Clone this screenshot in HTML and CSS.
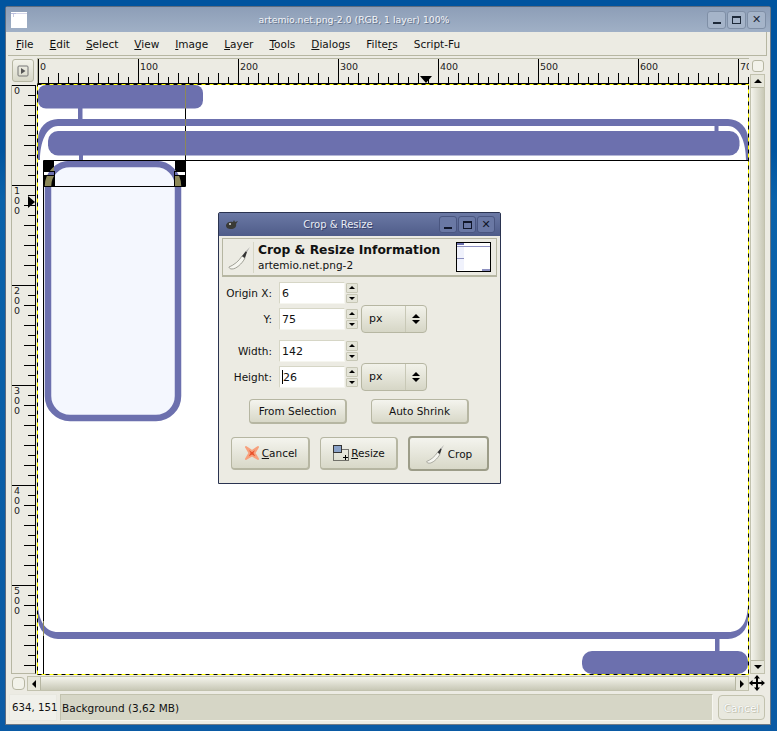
FILE: index.html
```html
<!DOCTYPE html>
<html lang="en">
<head>
    <meta charset="UTF-8">
    <title>artemio.net.png-2.0 (RGB, 1 layer) 100%</title>
    <link rel="stylesheet" href="styles.css">
</head>
<body>

    <div class="window">
        <div class="titlebar">
            <svg class="title-icon" width="16" height="16" viewBox="0 0 16 16">
                <rect width="16" height="16" fill="#fff"/>
                <rect x="0" y="1" width="5" height="1" fill="#b9bedd"/>
                <rect x="2" y="2" width="1" height="3" fill="#c9cce4"/>
                <rect x="5" y="1" width="11" height="1" fill="#d5d7ea"/>
            </svg>
            <div class="title-text">artemio.net.png-2.0 (RGB, 1 layer) 100%</div>
            <div class="wm-buttons">
                <div class="wm-btn"><span class="wm-min"></span></div>
                <div class="wm-btn"><span class="wm-max"></span></div>
                <div class="wm-btn"><span class="wm-close">✕</span></div>
            </div>
        </div>

        <div class="menubar">
            <span><u>F</u>ile</span>
            <span><u>E</u>dit</span>
            <span><u>S</u>elect</span>
            <span><u>V</u>iew</span>
            <span><u>I</u>mage</span>
            <span><u>L</u>ayer</span>
            <span><u>T</u>ools</span>
            <span><u>D</u>ialogs</span>
            <span>Filte<u>r</u>s</span>
            <span>Script-Fu</span>
        </div>

        <div class="workspace">
            <div class="menu-corner">
                <div class="corner-btn">
                    <svg width="12" height="12" viewBox="0 0 12 12">
                        <rect x="1" y="1" width="10" height="10" rx="1" fill="none" stroke="#777"/>
                        <path d="M4 3l4.500 3-4.500 3z" fill="#555"/>
                    </svg>
                </div>
            </div>

            <div class="ruler-h">
                <span>0</span><span>100</span><span>200</span><span>300</span>
                <span>400</span><span>500</span><span>600</span><span>700</span>
                <div class="ruler-mark"></div>
            </div>

            <div class="right-col">
                <div class="quick-btn"></div>
                <div class="vscroll">
                    <div class="scroll-btn"><i class="tri-up"></i></div>
                    <div class="scroll-btn"><i class="tri-down"></i></div>
                </div>
            </div>

            <div class="ruler-v">
                <span>0</span>
                <span>1<br>0<br>0</span>
                <span>2<br>0<br>0</span>
                <span>3<br>0<br>0</span>
                <span>4<br>0<br>0</span>
                <span>5<br>0<br>0</span>
                <div class="ruler-mark-v"></div>
            </div>

            <div class="canvas">
                <svg class="drawing" width="712" height="591" viewBox="37 84 712 591">
                    <defs>
                        <clipPath id="handles">
                            <path d="M44 161h10v10h-10zM175 161h10v10h-10zM44 176h10v10h-10zM175 176h10v10h-10z"/>
                        </clipPath>
                    </defs>
                    <rect x="37" y="84" width="712" height="591" fill="#fff"/>

                    <!-- frame pieces: only the corners and the long edges exist in the image -->
                    <path d="M38 160V139A20 20 0 0 1 58 119H728A20 20 0 0 1 748 139V160H746C746 143 740 126 728 126H58C46 126 40 143 40 160Z" fill="#6c70ae"/>
                    <path d="M38 606V618A20.500 20.500 0 0 0 58 639H728A20.500 20.500 0 0 0 748 618V606C747 622 742 632 728 632H58C46 632 39 622 38 606Z" fill="#6c70ae"/>

                    <rect x="38" y="85" width="165" height="23.500" rx="8" fill="#6c70ae"/>
                    <rect x="78" y="108" width="4.500" height="12" fill="#6c70ae"/>
                    <rect x="48" y="131" width="691.500" height="24.500" rx="10" fill="#6c70ae"/>
                    <rect x="714.500" y="125" width="4" height="6" fill="#6c70ae"/>
                    <rect x="79" y="155" width="4" height="7" fill="#6c70ae"/>
                    <rect x="48" y="164" width="130" height="254" rx="22" fill="#f4f7fe" stroke="#6c70ae" stroke-width="6.500"/>
                    <rect x="582" y="651" width="166" height="23" rx="10" fill="#6c70ae"/>
                    <rect x="715" y="638" width="4.500" height="14" fill="#6c70ae"/>

                    <!-- crop handles -->
                    <path d="M44 161h10v10h-10zM175 161h10v10h-10zM44 176h10v10h-10zM175 176h10v10h-10z" fill="#000"/>
                    <rect x="48" y="164" width="130" height="254" rx="22" fill="none" stroke="#8c8858" stroke-width="6.500" clip-path="url(#handles)"/>
                    <path d="M43.500 160.500h705M43.500 186.500h142M43.500 160.500v514M185.500 85v76M185.500 160.500v26M54.500 171v15M174.500 171v15M43 171.500h11M175 171.500h11M43 175.500h11M175 175.500h11" fill="none" stroke="#000"/>
                    <path d="M185.500 85v23.500M185.500 119v7M185.500 131v24.500M43.500 621v15" fill="none" stroke="#8c8858"/>

                    <!-- layer boundary -->
                    <rect x="37.500" y="84.500" width="711" height="590" fill="none" stroke="#ff0"/>
                    <rect x="37.500" y="84.500" width="711" height="590" fill="none" stroke="#000" stroke-dasharray="4 4"/>
                </svg>
            </div>

            <div class="corner-left">
                <div class="quick-btn"></div>
            </div>
            <div class="hscroll">
                <div class="scroll-btn"><i class="tri-left"></i></div>
                <div class="scroll-btn"><i class="tri-right"></i></div>
            </div>
            <div class="nav-corner">
                <svg width="16" height="16" viewBox="0 0 16 16">
                    <path d="M8 0l3 3.500h-2v3.500h3.500v-2l3.500 3-3.500 3v-2h-3.500v3.500h2l-3 3.500-3-3.500h2v-3.500h-3.500v2l-3.500-3 3.500-3v2h3.500v-3.500h-2z" fill="#000"/>
                </svg>
            </div>
        </div>

        <div class="statusbar">
            <div class="coords">634, 151</div>
            <div class="layer-info">Background (3,62 MB)</div>
            <div class="status-cancel">Cancel</div>
        </div>
    </div>

    <!-- Crop & Resize dialog -->
    <div class="dialog">
        <div class="dialog-title">
            <svg class="wilber" width="14" height="10" viewBox="0 0 14 10">
                <path d="M1 5c1-3 4-4 7-3l1-2 1 2 3-1-2 3c1 3-2 5-5 5-3 0-5-1-5-4z" fill="#3a3a36"/>
                <circle cx="5" cy="4" r="1" fill="#ddd"/>
            </svg>
            <div class="dialog-name">Crop &amp; Resize</div>
            <div class="wm-buttons small">
                <div class="wm-btn"><span class="wm-min"></span></div>
                <div class="wm-btn"><span class="wm-max"></span></div>
                <div class="wm-btn"><span class="wm-close">✕</span></div>
            </div>
        </div>

        <div class="dialog-body">
            <div class="info-box">
                <div class="info-icon">
                    <svg width="24" height="24" viewBox="0 0 24 24">
                        <path d="M2 21C7 19 12 15 15 10L18 12C15 18 9 23 5 23 3 23 2 22 2 21Z" fill="#f6f6f0" stroke="#8a8a80" stroke-width=".8"/>
                        <path d="M15 10L19 5 20 6 18 12Z" fill="#333"/>
                        <path d="M19 5L23 1 20 6Z" fill="#aaa"/>
                    </svg>
                </div>
                <div class="info-text">
                    <div class="info-head">Crop &amp; Resize Information</div>
                    <div class="info-sub">artemio.net.png-2</div>
                </div>
                <svg class="thumb" width="35" height="30" viewBox="0 0 35 30">
                    <rect x=".500" y=".500" width="34" height="29" fill="#fff" stroke="#000"/>
                    <rect x="1" y="1" width="7" height="2" fill="#6c70ae"/>
                    <rect x="1" y="4" width="33" height="1" fill="#8d90c0"/>
                    <rect x="1" y="5" width="7" height="23" fill="#f0f2fc"/>
                    <rect x="1" y="16" width="7" height="1" fill="#8d90c0"/>
                    <rect x="26" y="27" width="8" height="2" fill="#8d90c0"/>
                </svg>
            </div>

            <div class="fields first">
                <label>Origin X:</label>
                <div class="spin-entry"><span class="entry">6</span><div class="spin"><b><i class="tri-up"></i></b><b><i class="tri-down"></i></b></div></div>
                <div></div>
                <label>Y:</label>
                <div class="spin-entry"><span class="entry">75</span><div class="spin"><b><i class="tri-up"></i></b><b><i class="tri-down"></i></b></div></div>
                <div class="unit"><span>px</span><div class="unit-arrows"><i class="tri-up"></i><i class="tri-down"></i></div></div>
            </div>

            <div class="fields second">
                <label>Width:</label>
                <div class="spin-entry"><span class="entry">142</span><div class="spin"><b><i class="tri-up"></i></b><b><i class="tri-down"></i></b></div></div>
                <div></div>
                <label>Height:</label>
                <div class="spin-entry"><span class="entry"><span class="caret"></span>26</span><div class="spin"><b><i class="tri-up"></i></b><b><i class="tri-down"></i></b></div></div>
                <div class="unit"><span>px</span><div class="unit-arrows"><i class="tri-up"></i><i class="tri-down"></i></div></div>
            </div>

            <div class="mid-buttons">
                <div class="btn">From Selection</div>
                <div class="btn">Auto Shrink</div>
            </div>

            <div class="action-buttons">
                <div class="btn action">
                    <svg width="18" height="18" viewBox="0 0 18 18">
                        <path d="M3 3l6 4 6-4-3.500 6 3.500 6-6-3.500-6 3.500 3.500-6z" fill="#e8502a" stroke="#f7a07c" stroke-width="2" stroke-linejoin="round"/>
                    </svg>
                    <span><u>C</u>ancel</span>
                </div>
                <div class="btn action resize">
                    <svg width="18" height="16" viewBox="0 0 18 16">
                        <rect x="1.500" y="4.500" width="15" height="11" fill="none" stroke="#000" stroke-dasharray="1 1"/>
                        <rect x="1.500" y=".500" width="8" height="7" fill="#8aa2c8" stroke="#333"/>
                        <path d="M11 12.500h5M13.500 10v5" stroke="#000" fill="none"/>
                    </svg>
                    <span><u>R</u>esize</span>
                </div>
                <div class="btn action default">
                    <svg width="20" height="20" viewBox="0 0 24 24">
                        <path d="M2 21C7 19 12 15 15 10L18 12C15 18 9 23 5 23 3 23 2 22 2 21Z" fill="#f6f6f0" stroke="#8a8a80" stroke-width=".8"/>
                        <path d="M15 10L19 5 20 6 18 12Z" fill="#333"/>
                        <path d="M19 5L23 1 20 6Z" fill="#aaa"/>
                    </svg>
                    <span>Crop</span>
                </div>
            </div>
        </div>
    </div>

</body>
</html>
```

FILE: styles.css
```css
body {
    font-family: "DejaVu Sans", sans-serif;
    font-size: 10.5px;
    color: #111;
    background: linear-gradient(#00549f 0, #00549f 150px, #0a62aa 200px, #0a5aa4 100%);
    margin: 0;
    height: 731px;
    overflow: hidden;
    position: relative;
}

u {
    text-underline-offset: 1px;
}

.window {
    box-sizing: border-box;
    width: 766px;
    height: 719px;
    margin-left: 5px;
    position: relative;
    top: 6px;
    display: flex;
    flex-direction: column;
    background: #ecebe3;
    border: 1px solid #5d6c80;
    border-right-color: #6f7a86;
    border-bottom-color: #6f7a86;
    border-radius: 3px 3px 0 0;
}

.titlebar {
    height: 25px;
    flex: none;
    display: flex;
    align-items: center;
    padding: 0 4px 0 5px;
    background: linear-gradient(#8d9eb7, #a0b0c6);
}

.title-icon {
    flex: none;
}

.title-text {
    flex: 1;
    text-align: center;
    color: #f2f4f8;
    font-size: 9.3px;
    padding-right: 26px;
    text-shadow: 1px 1px 0 #66758c;
}

.wm-buttons {
    display: flex;
    gap: 1px;
    flex: none;
}

.wm-btn {
    box-sizing: border-box;
    width: 19px;
    height: 18px;
    border: 1px solid #7f8fa6;
    border-radius: 3px;
    display: flex;
    align-items: center;
    justify-content: center;
    background: #a5b4c9;
}

.wm-min {
    display: block;
    width: 8px;
    height: 2px;
    background: #1e2a3a;
    margin-top: 7px;
}

.wm-max {
    display: block;
    box-sizing: border-box;
    width: 9px;
    height: 8px;
    border: 1px solid #1e2a3a;
    border-top-width: 2px;
}

.wm-close {
    color: #1e2a3a;
    font-size: 11px;
    line-height: 1;
}

.menubar {
    height: 23px;
    flex: none;
    display: flex;
    align-items: center;
    gap: 16px;
    padding-left: 8px;
    border-bottom: 1px solid #b6b6a2;
    border-right: 1px solid #b6b6a2;
    margin-left: 2px;
    margin-right: 3px;
}

.workspace {
    flex: none;
    margin-top: 2px;
    margin-left: 5px;
    display: grid;
    grid-template-columns: 26px 712px 18px;
    grid-template-rows: 26px 591px 16px;
}

.menu-corner {
    display: flex;
    padding: 1px 0 0 1px;
}

.corner-btn {
    box-sizing: border-box;
    width: 22px;
    height: 23px;
    border: 1px solid #b6b6a2;
    border-radius: 3px;
    background: linear-gradient(#f2f2ea, #d8d8c8);
    display: flex;
    align-items: center;
    justify-content: center;
}

.ruler-h {
    display: flex;
    overflow: hidden;
    position: relative;
    box-sizing: border-box;
    height: 26px;
    border-top: 1px solid #b6b6a2;
    border-bottom: 1px solid #000;
    border-left: 1px solid #b6b6a2;
    font-size: 9.5px;
    color: #222;
    background:
        repeating-linear-gradient(90deg, #000 0 1px, transparent 1px 100px) 0 0 / 100% 100%,
        repeating-linear-gradient(90deg, #000 0 1px, transparent 1px 20px) 0 100% / 100% 10px no-repeat,
        repeating-linear-gradient(90deg, transparent 0 10px, #000 10px 11px, transparent 11px 20px) 0 100% / 100% 6px no-repeat,
        #ecebe3;
}

.ruler-h span {
    flex: none;
    width: 98px;
    padding-left: 2px;
    line-height: 15px;
}

.ruler-mark {
    position: absolute;
    left: 382px;
    bottom: 0;
    width: 0;
    height: 0;
    border-left: 6px solid transparent;
    border-right: 6px solid transparent;
    border-top: 7px solid #000;
}

.right-col {
    grid-row: 1 / 3;
    grid-column: 3;
    display: flex;
    flex-direction: column;
    align-items: center;
    padding: 2px 0 0 0;
}

.quick-btn {
    box-sizing: border-box;
    width: 12px;
    height: 12px;
    flex: none;
    border: 1px solid #b6b6a2;
    border-radius: 3px;
    background: #f2f2ea;
}

.vscroll {
    box-sizing: border-box;
    flex: 1;
    width: 15px;
    margin: 2px 0 1px -1px;
    display: flex;
    flex-direction: column;
    justify-content: space-between;
    border: 1px solid #c2c2ae;
    background: linear-gradient(90deg, #f4f4ec, #c8c8b6);
}

.scroll-btn {
    box-sizing: border-box;
    width: 13px;
    height: 13px;
    display: flex;
    align-items: center;
    justify-content: center;
    background: #e6e6da;
    border: 0 solid #b6b6a2;
}

.vscroll .scroll-btn:first-child {
    border-bottom-width: 1px;
}

.vscroll .scroll-btn:last-child {
    border-top-width: 1px;
}

.tri-up, .tri-down, .tri-left, .tri-right {
    display: block;
    width: 0;
    height: 0;
    border-style: solid;
    border-color: transparent;
}

.tri-up {
    border-width: 0 4px 4px;
    border-bottom-color: #000;
}

.tri-down {
    border-width: 4px 4px 0;
    border-top-color: #000;
}

.tri-left {
    border-width: 4px 4px 4px 0;
    border-right-color: #000;
}

.tri-right {
    border-width: 4px 0 4px 4px;
    border-left-color: #000;
}

.ruler-v {
    box-sizing: border-box;
    width: 25px;
    height: 589px;
    margin-top: 1px;
    border-right: 1px solid #000;
    border-left: 1px solid #b6b6a2;
    border-bottom: 1px solid #b6b6a2;
    overflow: hidden;
    position: relative;
    display: flex;
    flex-direction: column;
    font-size: 9.5px;
    line-height: 10px;
    color: #222;
    background:
        repeating-linear-gradient(#000 0 1px, transparent 1px 100px) 0 0 / 100% 100%,
        repeating-linear-gradient(transparent 0 19px, #000 19px 20px) 100% 1px / 11px 100% no-repeat,
        repeating-linear-gradient(transparent 0 9px, #000 9px 10px, transparent 10px 20px) 100% 1px / 7px 100% no-repeat,
        #ecebe3;
}

.ruler-v span {
    flex: none;
    height: 99px;
    padding: 1px 0 0 2px;
}

.ruler-mark-v {
    position: absolute;
    right: 0;
    top: 111px;
    width: 0;
    height: 0;
    border-top: 6px solid transparent;
    border-bottom: 6px solid transparent;
    border-left: 7px solid #000;
}

.canvas {
    line-height: 0;
}

.drawing {
    display: block;
}

.corner-left {
    display: flex;
    align-items: center;
    padding-left: 1px;
}

.corner-left .quick-btn {
    width: 13px;
    height: 13px;
    border-radius: 4px;
}

.hscroll {
    box-sizing: border-box;
    margin: 1px 0 0 -10px;
    width: 722px;
    height: 15px;
    display: flex;
    justify-content: space-between;
    border: 1px solid #c2c2ae;
    background: linear-gradient(#f4f4ec, #c8c8b6);
}

.hscroll .scroll-btn:first-child {
    border-right-width: 1px;
}

.hscroll .scroll-btn:last-child {
    border-left-width: 1px;
}

.nav-corner {
    display: flex;
    align-items: center;
    line-height: 0;
}

.statusbar {
    flex: none;
    display: flex;
    height: 27px;
    margin: 3px 0 0 3px;
    gap: 3px;
}

.coords {
    box-sizing: border-box;
    width: 48px;
    padding-left: 2px;
    display: flex;
    align-items: center;
    white-space: nowrap;
    font-size: 10.2px;
    background: #f0f0ea;
    border: 1px solid #e8e8e0;
}

.layer-info {
    box-sizing: border-box;
    width: 653px;
    padding-left: 1px;
    display: flex;
    align-items: center;
    background: #d6d6c6;
    border: 1px solid #c2c2ae;
    border-bottom-color: #f6f6f0;
    border-right-color: #f6f6f0;
}

.status-cancel {
    box-sizing: border-box;
    width: 47px;
    height: 25px;
    margin: 1px 0 0 2px;
    border: 1px solid #c2c2ae;
    border-radius: 4px;
    display: flex;
    align-items: center;
    justify-content: center;
    color: #fff;
    text-shadow: 0 0 1px #a8a898, 1px 1px 0 #c8c8b8;
    background: #e8e8de;
}

/* dialog sits over the image window */
.dialog {
    position: absolute;
    left: 218px;
    top: 212px;
    box-sizing: border-box;
    width: 283px;
    height: 272px;
    display: flex;
    flex-direction: column;
    border: 1px solid #2a3350;
    border-radius: 2px 2px 0 0;
    background: #ecebe3;
}

.dialog-title {
    flex: none;
    height: 23px;
    display: flex;
    align-items: center;
    padding: 0 5px 0 6px;
    color: #e8ecf4;
    font-size: 10px;
    background: linear-gradient(#6b79a5, #4f5c89);
    box-sizing: border-box;
}

.dialog-name {
    flex: 1;
    text-align: center;
    text-shadow: 1px 1px 0 #36406a;
    padding-right: 2px;
}

.wm-buttons.small .wm-btn {
    width: 18px;
    height: 17px;
    background: #6a78a4;
    border-color: #4a5680;
}

.wm-buttons.small .wm-min {
    margin-top: 6px;
    background: #10162a;
}

.wm-buttons.small .wm-max {
    border-color: #10162a;
}

.wm-buttons.small .wm-close {
    color: #10162a;
}

.dialog-body {
    flex: 1;
    padding: 2px 3px 0 3px;
}

.info-box {
    box-sizing: border-box;
    height: 39px;
    display: flex;
    align-items: center;
    border: 1px solid #b6b6a2;
    border-width: 1px 1px 2px 1px;
    padding-left: 4px;
}

.info-icon {
    flex: none;
    width: 27px;
    height: 31px;
    padding-top: 4px;
    box-sizing: border-box;
    border-right: 1px solid #d6d6c6;
}

.info-text {
    flex: 1;
    padding-left: 4px;
}

.info-head {
    font-size: 12.3px;
    font-weight: bold;
    line-height: 15px;
}

.info-sub {
    line-height: 14px;
}

.thumb {
    flex: none;
    margin-right: 5px;
}

.fields {
    display: grid;
    grid-template-columns: 50px 79px 66px;
    grid-template-rows: 22px 22px;
    column-gap: 7px;
    row-gap: 4px;
    align-items: center;
}

.fields.first {
    margin-top: 5px;
}

.fields.second {
    margin-top: 10px;
}

.fields label {
    text-align: right;
    white-space: nowrap;
}

.spin-entry {
    display: flex;
    height: 22px;
    gap: 1px;
}

.entry {
    box-sizing: border-box;
    width: 66px;
    height: 22px;
    padding-left: 2px;
    background: #fff;
    border: 1px solid #d6d6c6;
    border-right-color: #f6f6f0;
    border-bottom-color: #f6f6f0;
    font-size: 11px;
    display: flex;
    align-items: center;
}

.caret {
    width: 1px;
    height: 14px;
    background: #000;
}

.spin {
    width: 12px;
    display: flex;
    flex-direction: column;
    gap: 1px;
    padding: 1px 0;
    box-sizing: border-box;
}

.spin b {
    flex: 1;
    display: flex;
    align-items: center;
    justify-content: center;
    background: #e4e4d8;
    border: 1px solid #c8c8b6;
    border-radius: 1px;
}

.spin .tri-up {
    border-width: 0 3px 3px;
}

.spin .tri-down {
    border-width: 3px 3px 0;
}

.unit {
    box-sizing: border-box;
    height: 28px;
    margin: -1px 0 0 -4px;
    width: 66px;
    display: flex;
    align-items: center;
    border: 1px solid #b6b6a2;
    border-radius: 4px;
    background: linear-gradient(#f2f2ea, #d6d6c6);
    font-size: 11px;
}

.unit span {
    flex: 1;
    padding-left: 7px;
}

.unit-arrows {
    width: 20px;
    height: 26px;
    border-left: 1px solid #c8c8b6;
    display: flex;
    flex-direction: column;
    align-items: center;
    justify-content: center;
    gap: 2px;
}

.mid-buttons {
    display: flex;
    gap: 24px;
    padding-left: 27px;
    margin-top: 11px;
}

.btn {
    box-sizing: border-box;
    width: 98px;
    height: 25px;
    display: flex;
    align-items: center;
    justify-content: center;
    gap: 1px;
    border: 1px solid #b6b6a2;
    border-bottom-width: 2px;
    border-right-width: 2px;
    border-radius: 4px;
    background: linear-gradient(#f4f4ee, #d8d8c8);
}

.action-buttons {
    display: flex;
    gap: 10px;
    padding-left: 9px;
    margin-top: 13px;
}

.btn.action {
    width: 79px;
    height: 33px;
}

.btn.action.resize {
    width: 78px;
}

.btn.action.default {
    width: 81px;
    height: 35px;
    margin-top: -1px;
    border: 2px solid #9c9c88;
    gap: 3px;
}
```
